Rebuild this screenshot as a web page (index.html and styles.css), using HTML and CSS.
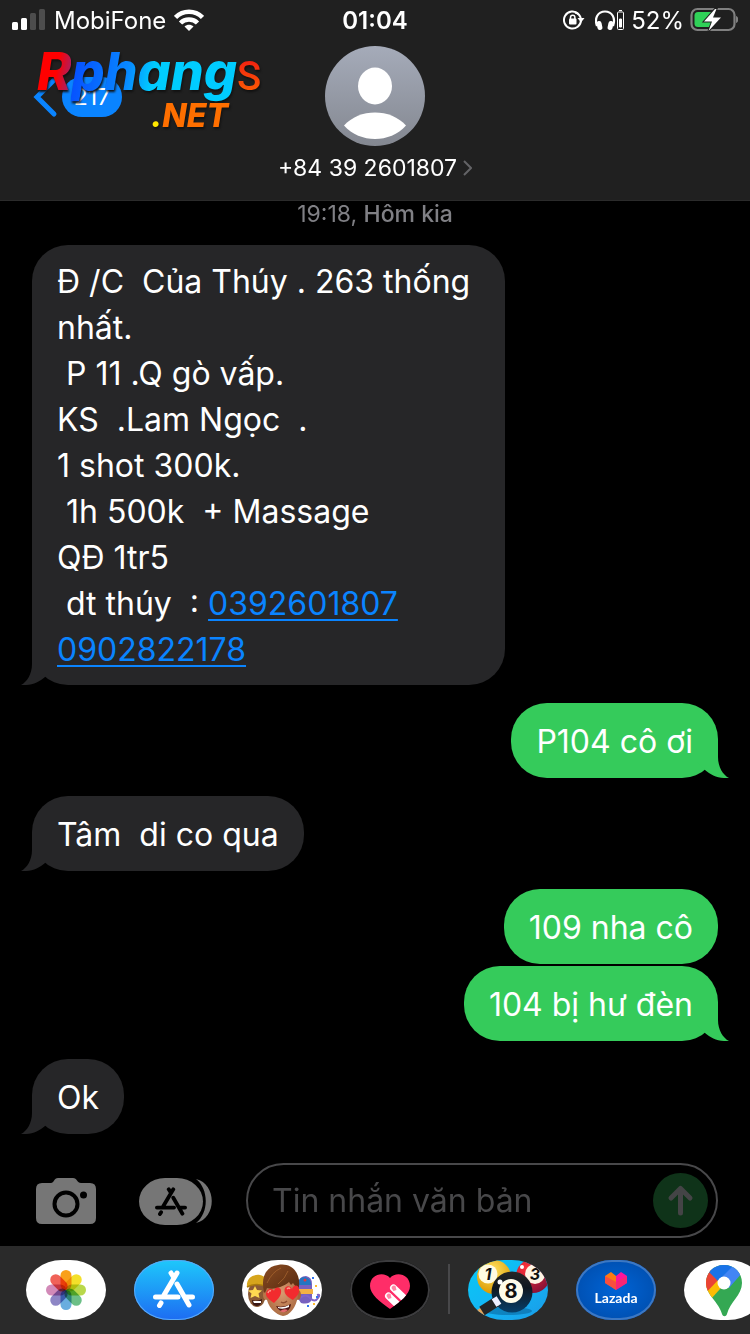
FILE: index.html
```html
<!DOCTYPE html>
<html lang="vi">
<head>
    <meta charset="utf-8">
    <meta name="viewport" content="width=device-width, initial-scale=1">
    <title>+84 39 2601807</title>
    <link rel="stylesheet" href="styles.css">
</head>
<body>
    <!-- shared shapes -->
    <svg class="defs" width="0" height="0" aria-hidden="true">
        <symbol id="tail-left" viewBox="0 0 36 36">
            <path d="M11 0V15C11 25 6 33 0 36H5C13 36 19 32 24 28L32 20V0Z" fill="currentColor"/>
        </symbol>
        <symbol id="tail-right" viewBox="0 0 36 36">
            <path d="M25 0V15C25 25 30 33 36 36H31C23 36 17 32 12 28L4 20V0Z" fill="currentColor"/>
        </symbol>
        <symbol id="store" viewBox="0 0 42 38">
            <g fill="none" stroke="currentColor" stroke-width="5" stroke-linecap="round">
                <path d="M18 3L20.500 7M24 3L11 25M24 14L36 35M2.500 27H25M32 27H39.500M8 33L6.500 35.500"/>
            </g>
        </symbol>
    </svg>

    <header class="header">
        <div class="status-bar">
            <div class="status-left">
                <svg width="34" height="22" viewBox="0 0 34 22">
                    <rect x="0" y="13" width="6" height="8" rx="1.500" fill="#fff"/>
                    <rect x="9" y="9" width="6" height="12" rx="1.500" fill="#fff"/>
                    <rect x="18" y="4" width="6" height="17" rx="1.500" fill="#4d4d4d"/>
                    <rect x="27" y="0" width="6" height="21" rx="1.500" fill="#4d4d4d"/>
                </svg>
                <span>MobiFone</span>
                <svg width="30" height="22" viewBox="0 0 30 22">
                    <g fill="none" stroke="#fff" stroke-width="4.500">
                        <path d="M1.500 8.500C9 0.800 21 0.800 28.500 8.500"/>
                        <path d="M6.500 14C11 9.300 19 9.300 23.500 14"/>
                    </g>
                    <path d="M10.500 17.500C13 15 17 15 19.500 17.500L15 22Z" fill="#fff"/>
                </svg>
            </div>
            <time class="clock">01:04</time>
            <div class="status-right">
                <svg width="26" height="20" viewBox="0 0 26 20">
                    <path d="M15.500 4A8.500 8.500 0 1 0 18 10" fill="none" stroke="#fff" stroke-width="2"/>
                    <path d="M12 2.500A8.500 8.500 0 0 1 18 9" fill="none" stroke="#fff" stroke-width="2"/>
                    <path d="M14.500 8H21.500L18 12.500Z" fill="#fff"/>
                    <rect x="6" y="8.500" width="7.500" height="6" rx="1" fill="#fff"/>
                    <path d="M7.500 9V7.500a2.200 2.200 0 0 1 4.400 0V9" fill="none" stroke="#fff" stroke-width="1.500"/>
                </svg>
                <svg width="30" height="22" viewBox="0 0 30 22">
                    <path d="M2 17C-1 9 3 2.500 10 2.500S21 9 18 17" fill="none" stroke="#fff" stroke-width="2.200"/>
                    <rect x="2" y="12" width="5" height="9" rx="2.500" transform="rotate(-12 4.500 16.500)" fill="#fff"/>
                    <rect x="13" y="12" width="5" height="9" rx="2.500" transform="rotate(12 15.500 16.500)" fill="#fff"/>
                    <rect x="22.500" y="3" width="6" height="17.500" rx="1" fill="none" stroke="#fff"/>
                    <path d="M24 1.500h3M24.500 10h2v8h-2z" fill="#fff" stroke="#fff"/>
                </svg>
                <span>52%</span>
                <svg width="48" height="26" viewBox="0 0 48 26">
                    <rect x="1.500" y="2" width="43" height="21" rx="6" fill="none" stroke="#808080" stroke-width="2.200"/>
                    <path d="M46 9c3 1 3 6 0 7z" fill="#808080"/>
                    <rect x="4.500" y="5" width="20" height="15" rx="3.500" fill="#30d158"/>
                    <path d="M25 2L14 14.500h8L18.500 24L31 10.500h-8L26.500 2Z" fill="#fff" stroke="#202020" stroke-width="2" paint-order="stroke"/>
                </svg>
            </div>
        </div>

        <div class="nav">
            <button class="back" type="button" aria-label="Back">
                <svg width="26" height="42" viewBox="0 0 26 42">
                    <path d="M22 4L5 21L22 38" fill="none" stroke="#0a84ff" stroke-width="5" stroke-linecap="round"/>
                </svg>
                <span class="badge">217</span>
            </button>
            <button class="contact" type="button">
                <svg width="100" height="100" viewBox="0 0 100 100">
                    <defs>
                        <linearGradient id="avatar" x1="0" y1="0" x2="0" y2="1">
                            <stop offset="0" stop-color="#a5abb9"/>
                            <stop offset="1" stop-color="#848891"/>
                        </linearGradient>
                    </defs>
                    <circle cx="50" cy="50" r="50" fill="url(#avatar)"/>
                    <ellipse cx="50" cy="40" rx="17" ry="18.500" fill="#fff"/>
                    <path d="M19 79.500C34 62 66 62 81 79.500C65 97.500 35 97.500 19 79.500Z" fill="#fff"/>
                </svg>
                <span class="number">+84 39 2601807
                    <svg width="9" height="16" viewBox="0 0 9 16"><path d="M1 1L8 8L1 15" fill="none" stroke="#636366" stroke-width="2"/></svg>
                </span>
            </button>
        </div>
        <div class="watermark">
            <div class="mark-top"><span class="mark-r">R</span><span class="mark-name">phang</span><span class="mark-s">S</span></div>
            <div class="mark-bottom"><span class="mark-dot">.</span>NET</div>
        </div>
    </header>

    <main class="messages">
        <p class="date">19:18, <b>Hôm kia</b></p>
        <div class="bubble received long">Đ /C  Của Thúy . 263 thống nhất.
 P 11 .Q gò vấp.
KS  .Lam Ngọc  .
1 shot 300k.
 1h 500k  + Massage
QĐ 1tr5
 dt thúy  : <a href="tel:0392601807">0392601807</a>
<a href="tel:0902822178">0902822178</a><svg class="tail"><use href="#tail-left"/></svg></div>
        <div class="bubble sent">P104 cô ơi<svg class="tail"><use href="#tail-right"/></svg></div>
        <div class="bubble received">Tâm  di co qua<svg class="tail"><use href="#tail-left"/></svg></div>
        <div class="bubble sent">109 nha cô</div>
        <div class="bubble sent follow">104 bị hư đèn<svg class="tail"><use href="#tail-right"/></svg></div>
        <div class="bubble received">Ok<svg class="tail"><use href="#tail-left"/></svg></div>
    </main>

    <form class="composer">
        <button class="tool" type="button" aria-label="Camera">
            <svg width="60" height="48" viewBox="0 0 60 48">
                <path d="M6 6H15C18 6 18 1 22 1H37C41 1 41 6 45 6H54Q60 6 60 12V41Q60 47 54 47H6Q0 47 0 41V12Q0 6 6 6Z" fill="#767676"/>
                <circle cx="30" cy="27" r="11.500" fill="none" stroke="#000" stroke-width="4"/>
                <circle cx="47.500" cy="18" r="3.500" fill="#000"/>
            </svg>
        </button>
        <button class="tool apps-button" type="button" aria-label="Apps">
            <svg width="74" height="48" viewBox="0 0 74 48">
                <path d="M57 2C78 7 78 41 57 46C70 36 70 12 57 2Z" fill="#767676"/>
                <rect x="0" y="1" width="64" height="47" rx="26" ry="23.500" fill="#767676"/>
                <use href="#store" x="16" y="10" width="32" height="29" color="#000"/>
            </svg>
        </button>
        <div class="field">
            <input type="text" placeholder="Tin nhắn văn bản" aria-label="Tin nhắn văn bản">
            <button class="send" type="submit" aria-label="Send">
                <svg width="55" height="55" viewBox="0 0 55 55">
                    <path d="M27.500 40V15.500M18 25L27.500 15.500L37 25" fill="none" stroke="#444446" stroke-width="5" stroke-linecap="round" stroke-linejoin="round"/>
                </svg>
            </button>
        </div>
    </form>

    <nav class="app-strip">
        <a class="app" href="#photos" aria-label="Photos">
            <svg viewBox="0 0 80 60">
                <rect width="80" height="60" fill="#fff"/>
                <g class="petals">
                    <rect x="34.500" y="10" width="11" height="20" rx="5.500" fill="#f9a01b"/>
                    <rect x="34.500" y="10" width="11" height="20" rx="5.500" fill="#f4e02a" transform="rotate(45 40 30)"/>
                    <rect x="34.500" y="10" width="11" height="20" rx="5.500" fill="#b9d84b" transform="rotate(90 40 30)"/>
                    <rect x="34.500" y="10" width="11" height="20" rx="5.500" fill="#6cbf87" transform="rotate(135 40 30)"/>
                    <rect x="34.500" y="10" width="11" height="20" rx="5.500" fill="#69addf" transform="rotate(180 40 30)"/>
                    <rect x="34.500" y="10" width="11" height="20" rx="5.500" fill="#8d86c5" transform="rotate(225 40 30)"/>
                    <rect x="34.500" y="10" width="11" height="20" rx="5.500" fill="#d28ab8" transform="rotate(270 40 30)"/>
                    <rect x="34.500" y="10" width="11" height="20" rx="5.500" fill="#f06258" transform="rotate(315 40 30)"/>
                </g>
            </svg>
        </a>
        <a class="app app-store" href="#store-app" aria-label="App Store">
            <svg viewBox="0 0 80 60"><use href="#store" x="19" y="10" width="42" height="38" color="#fff"/></svg>
        </a>
        <a class="app" href="#memoji" aria-label="Memoji">
            <svg viewBox="0 0 80 60">
                <defs>
                    <radialGradient id="skin" cx=".5" cy=".45" r=".6">
                        <stop offset="0" stop-color="#d99a70"/>
                        <stop offset="1" stop-color="#a8683f"/>
                    </radialGradient>
                    <linearGradient id="hair" x1="0" y1="0" x2="1" y2="1">
                        <stop offset="0" stop-color="#8a4c22"/>
                        <stop offset="1" stop-color="#54280f"/>
                    </linearGradient>
                </defs>
                <rect width="80" height="60" fill="#fff"/>
                <ellipse cx="15" cy="34" rx="9" ry="13" fill="#8a5a35"/>
                <path d="M5 27C4 18 11 14 18 15C24 16 26 21 25 27C18 24 11 24 5 27Z" fill="#d6a51c"/>
                <path d="M5 27Q15 22 25 27" fill="none" stroke="#a97a0d" stroke-width="1.500"/>
                <path d="M13 26l2 4 5 .5-3.500 3 1 4.500-4.500-2-4.500 2 1-4.500-3.500-3 5-.5z" fill="#ffd951"/>
                <path d="M10 40q5 2 10-1q0 7-5 7t-5-6z" fill="#3b1714"/>
                <path d="M11 41h8v2h-7z" fill="#fff"/>
                <path d="M56 24Q57 16 64 16Q70 17 70 24V39Q68 45 59 43L55 37Z" fill="#7760bf"/>
                <path d="M56 25Q56 17 63 17Q69 18 69 25Z" fill="#2275c2"/>
                <path d="M55 29H71V34H55Z" fill="#f3b143"/>
                <path d="M58 38Q64 33 68 38Q73 43 76 38Q79 34 75 35" fill="none" stroke="#8065cb" stroke-width="2"/>
                <circle cx="63" cy="20" r="1.500" fill="#df3544"/>
                <path d="M70 17h2v2h-2zM74 36h2v2h-2zM65 45h2v2h-2z" fill="#3174ed"/>
                <path d="M73 25h2v2h-2zM71 43h2v2h-2z" fill="#ffbb31"/>
                <ellipse cx="24" cy="35" rx="3" ry="5" fill="#b87549"/>
                <ellipse cx="56" cy="35" rx="3" ry="5" fill="#a96439"/>
                <path d="M24 20Q40 8 56 20V35C55 47 47 56 41 56C34 55 25 47 24 35Z" fill="url(#skin)"/>
                <path d="M22 32C18 15 26 6 36 5C50 2 61 14 56 32L54 27L51 23L49 25L47 22C41 27 32 30 25 28L23 33Z" fill="url(#hair)"/>
                <path d="M25 23Q30 12 39 8M36 24Q43 19 46 11" fill="none" stroke="#a5632f" stroke-width=".8"/>
                <path d="M32 43C26 39 22 35 25 31C27 28 31 29 32 31C33 26 38 27 39 30C40 35 36 39 32 43Z" fill="#f22b2e"/>
                <path d="M51 40C45 37 41 33 43 28C45 25 49 26 50 29C52 24 57 25 57 29C58 34 54 37 51 40Z" fill="#f22b2e"/>
                <path d="M26 33q1-3 3-2M45 29q2-2 3 0" fill="none" stroke="#ff9a8c" stroke-width="1.500"/>
                <path d="M39 42Q42 44 45 41" fill="none" stroke="#8f4e32" stroke-width="1.500"/>
                <path d="M34 46Q41 48 49 44C48 54 38 54 34 46Z" fill="#4b1514"/>
                <path d="M36 47Q42 48 47 45V47Q41 50 36 48Z" fill="#fff"/>
                <path d="M38 51Q42 48 46 50Q42 54 38 51Z" fill="#e46a6c"/>
            </svg>
        </a>
        <a class="app digital-touch" href="#digital-touch" aria-label="Digital Touch">
            <svg viewBox="0 0 80 60">
                <defs><clipPath id="heart"><path d="M40 49C30 42 20 34 20 26C20 14 34 11 40 18C46 11 60 14 60 26C60 34 50 42 40 49Z"/></clipPath></defs>
                <g clip-path="url(#heart)">
                    <rect x="18" y="10" width="44" height="42" fill="#ff2d68"/>
                    <g stroke="#fff" stroke-width="7" stroke-linecap="round">
                        <path d="M43.500 28L59 43M38.500 36L52 49"/>
                    </g>
                    <path d="M41.500 28a2.500 2.500 0 0 1 4-2l1 4-3 1zM36.500 36a2.500 2.500 0 0 1 4-2l1 4-3 1z" fill="#ff87a6"/>
                </g>
            </svg>
        </a>
        <span class="divider"></span>
        <a class="app pool" href="#pool" aria-label="8 Ball Pool">
            <svg viewBox="0 0 80 60">
                <defs>
                    <radialGradient id="ball-one" cx=".45" cy=".3" r=".7"><stop offset="0" stop-color="#ffe463"/><stop offset="1" stop-color="#dc9900"/></radialGradient>
                    <radialGradient id="ball-three" cx=".3" cy=".25" r=".8"><stop offset="0" stop-color="#ff3038"/><stop offset="1" stop-color="#8b1237"/></radialGradient>
                    <linearGradient id="ball-eight" x1="0" y1="0" x2="0" y2="1"><stop offset="0" stop-color="#262626"/><stop offset=".4" stop-color="#101820"/><stop offset="1" stop-color="#073e69"/></linearGradient>
                    <linearGradient id="felt" x1="0" y1="0" x2="1" y2="1"><stop offset="0" stop-color="#08c8f5"/><stop offset=".5" stop-color="#13b6f5"/><stop offset="1" stop-color="#1a9ae6"/></linearGradient>
                </defs>
                <rect width="80" height="60" fill="url(#felt)"/>
                <circle cx="26" cy="17" r="17" fill="url(#ball-one)"/>
                <circle cx="20" cy="14" r="9.500" fill="#fffbe3"/>
                <text class="ball-number" x="20" y="20">1</text>
                <circle cx="65" cy="16" r="17" fill="url(#ball-three)"/>
                <circle cx="67" cy="14" r="10" fill="#fff5e4"/>
                <text class="ball-number" x="67" y="20">3</text>
                <circle cx="54" cy="7" r="2" fill="#fff"/>
                <ellipse cx="40" cy="51" rx="24" ry="4" fill="#075990" opacity=".5"/>
                <circle cx="44" cy="32" r="20.500" fill="url(#ball-eight)"/>
                <circle cx="43" cy="31" r="12" fill="#fffce9"/>
                <text class="ball-number eight" x="43" y="38">8</text>
                <circle cx="32" cy="22" r="2.500" fill="#fff"/>
                <path d="M7 56L29 42" stroke="#e2a35a" stroke-width="8"/>
                <path d="M14 51L28 42" stroke="#242424" stroke-width="10"/>
                <path d="M26 43L31 40" stroke="#efefff" stroke-width="9"/>
            </svg>
        </a>
        <a class="app lazada" href="#lazada" aria-label="Lazada">
            <svg viewBox="0 0 80 60">
                <path d="M29 16L35 12L40 16V30L29 23Z" fill="#ff7a12"/>
                <path d="M51 16L45 12L40 16V30L51 23Z" fill="#ff139c"/>
                <path d="M29 16L40 22L51 16V23L40 30L29 23Z" fill="#f5325a" opacity=".6"/>
                <text x="40" y="43" text-anchor="middle">Lazada</text>
            </svg>
        </a>
        <a class="app" href="#maps" aria-label="Google Maps">
            <svg viewBox="0 0 80 60">
                <defs><clipPath id="pin"><path d="M40 5C29 5 22 13 22 23C22 35 35 42 38 54C39 57 42 57 43 54C46 42 58 35 58 23C58 13 51 5 40 5Z"/></clipPath></defs>
                <rect width="80" height="60" fill="#fff"/>
                <g clip-path="url(#pin)">
                    <rect x="20" y="3" width="40" height="56" fill="#34a853"/>
                    <path d="M18 49L46 18L34 6L18 24Z" fill="#fbbc04"/>
                    <path d="M18 37L36 18L26 8L18 12Z" fill="#ea4335"/>
                    <path d="M24 11L34 21L53 4H25Z" fill="#1a73e8"/>
                    <path d="M50 5L37 18L45 28L58 13Z" fill="#4285f4"/>
                </g>
                <circle cx="40" cy="23" r="6.500" fill="#fff"/>
            </svg>
        </a>
    </nav>
</body>
</html>
```
FILE: styles.css
```css
* {
    box-sizing: border-box;
}
body {
    margin: 0;
    min-height: 100vh;
    display: flex;
    flex-direction: column;
    background-color: #000;
    color: #fff;
    font-family: Inter, "Noto Sans", sans-serif;
}
button {
    padding: 0;
    border: none;
    background: none;
    color: inherit;
    font-family: inherit;
    cursor: pointer;
}
svg {
    display: block;
    flex-shrink: 0;
}
.defs {
    position: absolute;
}

/* header */
.header {
    position: relative;
    height: 201px;
    background-color: #202020;
    border-bottom: 1px solid #2b2b2b;
}
.status-bar {
    display: grid;
    grid-template-columns: 1fr auto 1fr;
    align-items: center;
    height: 40px;
    padding: 0 12px;
    font-size: 24px;
}
.status-left, .status-right {
    display: flex;
    align-items: center;
    gap: 8px;
}
.status-right {
    justify-content: flex-end;
    gap: 6px;
}
.clock {
    font-weight: 600;
}
.nav {
    display: grid;
    grid-template-columns: 1fr auto 1fr;
    align-items: start;
    padding: 6px 32px 0;
}
.back {
    display: flex;
    align-items: center;
    gap: 4px;
    justify-self: start;
    margin-top: 30px;
}
.badge {
    width: 60px;
    border-radius: 20px;
    background-color: #0a84ff;
    font-size: 23px;
    line-height: 40px;
}
.contact {
    display: flex;
    flex-direction: column;
    align-items: center;
    gap: 8px;
}
.number {
    display: flex;
    align-items: center;
    gap: 6px;
    font-size: 23px;
    line-height: 28px;
}

/* site mark over the header */
.watermark {
    position: absolute;
    top: 45px;
    left: 37px;
    font-weight: 800;
    font-style: italic;
    filter: drop-shadow(1px 2px 1px #111);
    pointer-events: none;
}
.mark-top {
    font-size: 52px;
    line-height: 54px;
}
.mark-top span {
    color: transparent;
    background-clip: text;
    -webkit-background-clip: text;
}
.mark-r {
    background-image: linear-gradient(100deg, #f00 55%, #8a2b85);
}
.mark-name {
    background-image: linear-gradient(100deg, #0648ff, #0888ff 35%, #00ccff 50%);
}
.mark-s {
    background-image: linear-gradient(#f01414, #ff6a00);
    font-family: Roboto, sans-serif;
    font-size: 40px;
    font-weight: 500;
    font-style: normal;
}
.mark-bottom {
    padding-left: 114px;
    color: #ff6f00;
    font-size: 32px;
    line-height: 24px;
}
.mark-dot {
    color: #ffe800;
}

/* conversation */
.messages {
    flex: 1;
    display: flex;
    flex-direction: column;
    align-items: flex-start;
    padding: 0 32px 29px;
}
.date {
    align-self: center;
    margin: 0;
    color: #808085;
    font-size: 23px;
    line-height: 26px;
}
.date b {
    font-weight: 500;
}
.bubble {
    position: relative;
    max-width: 69%;
    min-height: 75px;
    margin-top: 18px;
    padding: 16px 25px 13px;
    border-radius: 36px;
    font-size: 32px;
    line-height: 46px;
    white-space: pre-wrap;
}
.long {
    padding: 14px 25px 12px;
}
.received {
    background-color: #262628;
}
.sent {
    align-self: flex-end;
    background-color: #35cb5b;
}
.follow {
    margin-top: 2px;
}
.bubble a {
    color: #0a84ff;
    text-decoration-thickness: 2px;
    text-underline-offset: 4px;
}
.tail {
    position: absolute;
    bottom: 0;
    width: 36px;
    height: 36px;
}
.received .tail {
    left: -11px;
    color: #262628;
}
.sent .tail {
    right: -11px;
    color: #35cb5b;
}

/* message box */
.composer {
    display: flex;
    align-items: center;
    padding: 0 32px 8px 36px;
}
.tool {
    flex: none;
}
.apps-button {
    margin: 0 33px 0 43px;
}
.field {
    flex: 1;
    display: flex;
    align-items: center;
    min-width: 0;
    height: 75px;
    padding: 0 8px 0 24px;
    border: 2px solid #48484a;
    border-radius: 38px;
}
.field input {
    flex: 1;
    width: 100%;
    min-width: 0;
    padding: 0;
    border: none;
    outline: none;
    background: none;
    color: #fff;
    font-family: inherit;
    font-size: 32px;
}
.field input::placeholder {
    color: #48484a;
    opacity: 1;
}
.send {
    flex: none;
    border-radius: 50%;
    background-color: #0f3319;
}

/* app drawer */
.app-strip {
    display: flex;
    gap: 28px;
    height: 88px;
    padding: 14px 0 0 26px;
    overflow: hidden;
    background-color: #2a2a2a;
}
.app {
    flex: none;
    width: 80px;
    height: 60px;
    border-radius: 36px / 30px;
    overflow: hidden;
}
.petals rect {
    mix-blend-mode: multiply;
}
.app-store {
    background-image: linear-gradient(#1ec8fb, #1d6cf2);
    box-shadow: inset 0 0 0 1px #59a9f7;
}
.digital-touch {
    background-color: #000;
    box-shadow: inset 0 0 0 2px #3c3c3e;
}
.divider {
    flex: none;
    width: 2px;
    height: 50px;
    margin: 4px -10px 0;
    background-color: #48484a;
}
.ball-number {
    fill: #111;
    font-size: 16px;
    font-weight: 700;
    font-style: italic;
    text-anchor: middle;
}
.pool .eight {
    font-size: 20px;
    font-style: normal;
}
.lazada {
    background-image: radial-gradient(#0064d6, #0049a5);
    box-shadow: inset 0 0 0 2px #3c78c4;
}
.lazada text {
    fill: #fff;
    font-family: Lato, sans-serif;
    font-size: 14px;
    font-weight: 700;
}
```
